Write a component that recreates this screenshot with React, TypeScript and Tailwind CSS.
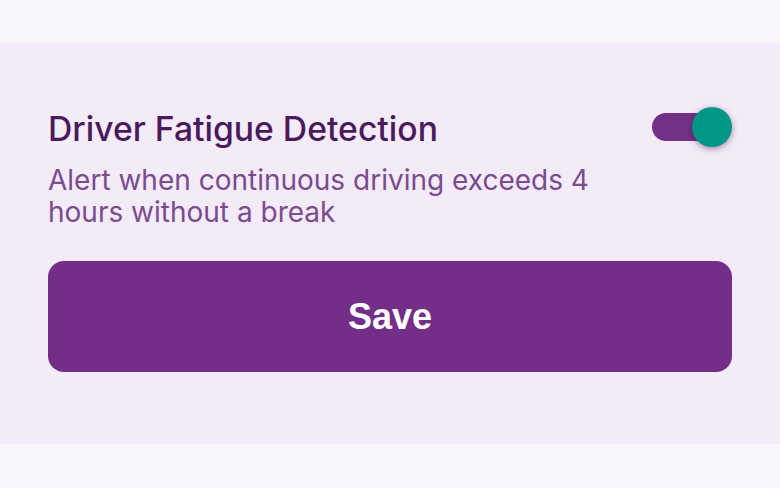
import React from "react";

export default function App() {
  return (
    <div className="w-[780px] h-[488px] bg-[#f8f6fa] flex flex-col" style={{ fontFamily: "Inter, 'Noto Sans', sans-serif" }}>
      <div className="h-[43px] shrink-0" />
      <div className="h-[401px] bg-[#f3ebf7] px-[48px] pt-[66px] flex flex-col">
        <div className="flex items-center justify-between h-[40px]">
          <div className="text-[33.7px] leading-[40px] font-medium text-[#4a1a5c]">Driver Fatigue Detection</div>
          <div className="relative w-[80px] h-[40px] shrink-0 mb-[4px]">
            <div className="absolute left-0 top-[6px] w-[72px] h-[28px] rounded-full bg-[#733087]" />
            <div className="absolute right-0 top-0 w-[40px] h-[40px] rounded-full bg-[#009688] shadow-[0_2px_6px_rgba(60,20,70,0.45)]" />
          </div>
        </div>
        <div className="mt-[15px] w-[580px] text-[28px] leading-[32px] text-[#7b4a8f]">
          Alert when continuous driving exceeds 4 hours without a break
        </div>
        <button className="mt-[33px] h-[111px] w-full rounded-[16px] bg-[#732f87] text-white text-[36px] font-bold" style={{ fontFamily: "'Liberation Sans', Arial, sans-serif" }}>
          Save
        </button>
      </div>
    </div>
  );
}
